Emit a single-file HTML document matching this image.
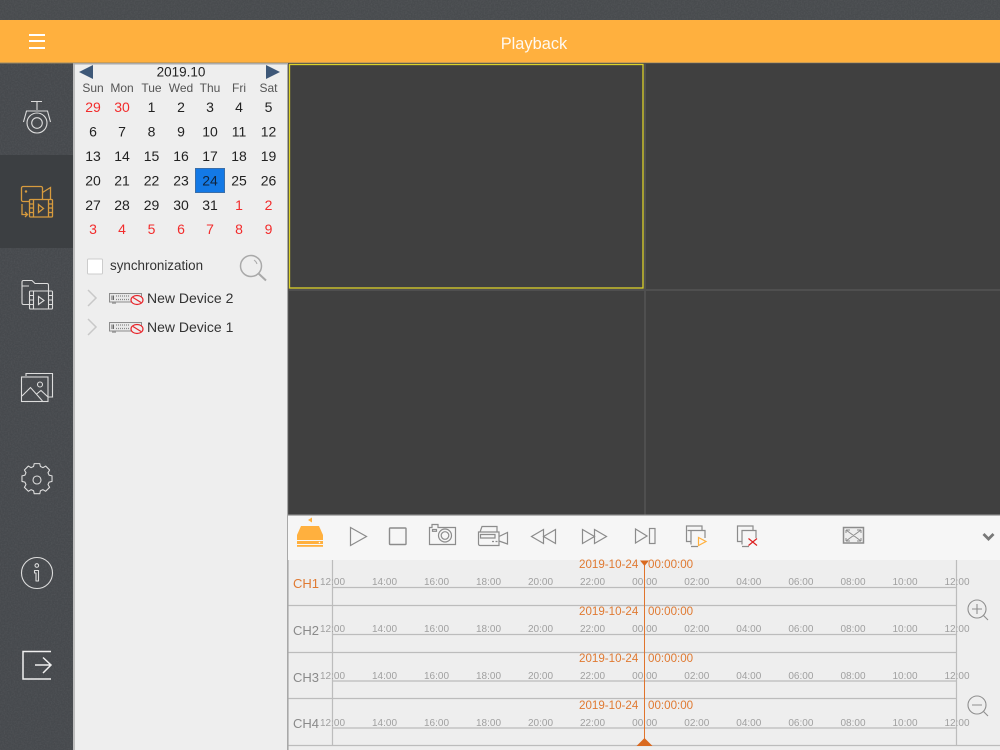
<!DOCTYPE html>
<html>
<head>
<meta charset="utf-8">
<title>Playback</title>
<style>
html,body{margin:0;padding:0;width:1000px;height:750px;overflow:hidden;background:#46494c}
svg{display:block;font-family:"Liberation Sans",sans-serif}
</style>
</head>
<body>
<svg width="1000" height="750" viewBox="0 0 1000 750" xmlns="http://www.w3.org/2000/svg">
<defs>
<filter id="n" x="0" y="0" width="100%" height="100%"><feTurbulence type="fractalNoise" baseFrequency="0.7" numOctaves="2" seed="4"/><feColorMatrix values="0 0 0 0 1 0 0 0 0 1 0 0 0 0 1 0.5 0 0 0 -0.17"/></filter>
</defs>
<!-- backgrounds -->
<rect width="1000" height="750" fill="#46494d"/>
<rect x="0" y="0" width="1000" height="20" fill="#484b4e"/>
<rect x="0" y="155" width="73" height="93" fill="#3c3f42"/>
<rect x="0" y="0" width="1000" height="20" filter="url(#n)" opacity=".2"/>
<rect x="0" y="63" width="73" height="92" filter="url(#n)" opacity=".2"/>
<rect x="0" y="248" width="73" height="502" filter="url(#n)" opacity=".2"/>
<rect x="0" y="20" width="1000" height="43" fill="#ffb03e"/>
<rect x="0" y="62.5" width="1000" height="1" fill="#9a8a68"/>
<rect x="29" y="34" width="16" height="2" fill="#fff"/>
<rect x="29" y="40" width="16" height="2" fill="#fff"/>
<rect x="29" y="47" width="16" height="2" fill="#fff"/>
<text x="534" y="49" font-size="16.4" fill="#fff" fill-opacity=".92" text-anchor="middle">Playback</text>

<!-- side icons -->
<g fill="none" stroke="#dcdcdc" stroke-width="1.1">
<path d="M31 101.5H42M37 102V110M23.500 122L26.500 111H47.500L50.500 122"/>
<circle cx="37" cy="123" r="10"/><circle cx="37" cy="123" r="5.300"/>
<path d="M29 304.500H23.500A1.500 1.500 0 0 1 22 303V282A1.500 1.500 0 0 1 23.500 280.500H32L35 283.500H47A1.500 1.500 0 0 1 48.500 285V291M22 286H29"/>
<rect x="29.500" y="291" width="23" height="18" rx="1"/><path d="M33.500 291V309M48.500 291V309M29.500 295.500H33.500M29.500 300H33.500M29.500 304.500H33.500M48.500 295.500H52.500M48.500 300H52.500M48.500 304.500H52.500M38.500 296.500L44 300.500L38.500 304.500Z"/>
<path d="M26 376V373.500H52.500V397H48.500"/><rect x="21.500" y="377" width="26.500" height="24.500"/><circle cx="40" cy="384.500" r="2.500"/><path d="M22 396L30.500 387.500L42.500 401M36 394.500L41 390.500L48 397"/>
<g transform="translate(37 480) scale(.84) translate(-37 -484)" stroke-width="1.300"><path d="M33.700 464.500h6.600l.8 3.500 3 1.300 3.200-1.900 4.700 4.700-1.900 3.200 1.300 3 3.500.8v6.600l-3.500.8-1.300 3 1.900 3.200-4.700 4.700-3.200-1.900-3 1.300-.8 3.500h-6.600l-.8-3.500-3-1.300-3.200 1.900-4.700-4.700 1.900-3.200-1.300-3-3.500-.8v-6.600l3.500-.8 1.300-3-1.900-3.200 4.700-4.700 3.200 1.900 3-1.300z" stroke-linejoin="round"/></g>
<circle cx="37" cy="480" r="4"/>
<circle cx="37" cy="573" r="15.500"/><circle cx="36.800" cy="565.500" r="1.800"/><path d="M34.500 570.500h4v10.500h-2.500v-8h-1.500z" stroke-linejoin="round"/>
</g>
<path d="M51 651.500H23V679H51M35 665H51M43 657.500L51 665L43 673" fill="none" stroke="#f0f0f0" stroke-width="1.500"/>
<g fill="none" stroke="#d79b3e" stroke-width="1.300">
<path d="M29 201.500H23A1.500 1.500 0 0 1 21.500 200V188A1.500 1.500 0 0 1 23 186.500H41A1.500 1.500 0 0 1 42.500 188V199"/><path d="M42.500 192.500L50.500 187.500V199"/><circle cx="26" cy="191.500" r=".6"/>
<rect x="29.500" y="199.500" width="23" height="17.500" rx="1"/><path d="M33.500 199.500V217M48.500 199.500V217M29.500 204H33.500M29.500 208H33.500M29.500 212.500H33.500M48.500 204H52.500M48.500 208H52.500M48.500 212.500H52.500M38.500 204.500L43.500 208.500L38.500 212.500Z"/>
<path d="M22 204V214.500H27.500M25 212L27.500 214.500L25 217"/>
</g>

<!-- left panel -->
<rect x="73" y="63" width="215" height="687" fill="#eeeeee"/>
<rect x="73" y="63" width="2" height="687" fill="#bdbdbd"/>
<rect x="287" y="63" width="1.500" height="687" fill="#a8a8a8"/>
<rect x="73" y="63" width="215" height="1.500" fill="#aaaaaa"/>
<path d="M93 65V79L79 72Z" fill="#3e5878"/><path d="M266 65V79L280 72Z" fill="#3e5878"/>
<text x="181" y="76.500" font-size="13.500" fill="#222" text-anchor="middle">2019.10</text>
<g font-size="12" fill="#555" text-anchor="middle">
<text x="93" y="92">Sun</text><text x="122" y="92">Mon</text><text x="151.500" y="92">Tue</text><text x="181" y="92">Wed</text><text x="210" y="92">Thu</text><text x="239" y="92">Fri</text><text x="268.500" y="92">Sat</text>
</g>
<rect x="195.500" y="168.500" width="29" height="24" fill="#1379e6" stroke="#3a6ea8"/>
<g font-size="14" fill="#222" text-anchor="middle">
<text x="93" y="112" fill="#f22c2c">29</text><text x="122" y="112" fill="#f22c2c">30</text><text x="151.500" y="112">1</text><text x="181" y="112">2</text><text x="210" y="112">3</text><text x="239" y="112">4</text><text x="268.500" y="112">5</text>
<text x="93" y="136.500">6</text><text x="122" y="136.500">7</text><text x="151.500" y="136.500">8</text><text x="181" y="136.500">9</text><text x="210" y="136.500">10</text><text x="239" y="136.500">11</text><text x="268.500" y="136.500">12</text>
<text x="93" y="161">13</text><text x="122" y="161">14</text><text x="151.500" y="161">15</text><text x="181" y="161">16</text><text x="210" y="161">17</text><text x="239" y="161">18</text><text x="268.500" y="161">19</text>
<text x="93" y="185.500">20</text><text x="122" y="185.500">21</text><text x="151.500" y="185.500">22</text><text x="181" y="185.500">23</text><text x="210" y="185.500" fill="#10233a">24</text><text x="239" y="185.500">25</text><text x="268.500" y="185.500">26</text>
<text x="93" y="210">27</text><text x="122" y="210">28</text><text x="151.500" y="210">29</text><text x="181" y="210">30</text><text x="210" y="210">31</text><text x="239" y="210" fill="#f22c2c">1</text><text x="268.500" y="210" fill="#f22c2c">2</text>
<text x="93" y="234" fill="#f22c2c">3</text><text x="122" y="234" fill="#f22c2c">4</text><text x="151.500" y="234" fill="#f22c2c">5</text><text x="181" y="234" fill="#f22c2c">6</text><text x="210" y="234" fill="#f22c2c">7</text><text x="239" y="234" fill="#f22c2c">8</text><text x="268.500" y="234" fill="#f22c2c">9</text>
</g>
<rect x="87.500" y="259" width="15" height="15" rx="1" fill="#fff" stroke="#cccccc"/>
<text x="110" y="270" font-size="13.400" fill="#333">synchronization</text>
<circle cx="251" cy="266" r="10.500" fill="none" stroke="#a9a9a9" stroke-width="1.500"/>
<path d="M258.500 273.500L266 280.500" stroke="#a9a9a9" stroke-width="2"/>
<path d="M254 260a6.500 6.500 0 0 1 3 4" fill="none" stroke="#a9a9a9"/>
<g>
<path d="M88 290L96 298L88 306" fill="none" stroke="#c8c8c8" stroke-width="1.500"/>
<rect x="109.500" y="293.500" width="32" height="8.500" fill="#e8e8e8" stroke="#8c8c8c"/>
<path d="M112 295.500V300M113.500 295.500V300" stroke="#666" stroke-width="1"/>
<path d="M116 296H130M116 299.500H130" stroke="#888" stroke-width="1.200" stroke-dasharray="1 1"/>
<path d="M112 303H116" stroke="#999" stroke-width="1.500"/>
<ellipse cx="137" cy="300" rx="6" ry="4.500" fill="#eee" stroke="#e8252b" stroke-width="1.200"/>
<path d="M133 297.500L141 302.500" stroke="#e8252b" stroke-width="1.200"/>
<text x="147" y="303" font-size="14" fill="#333">New Device 2</text>
</g>
<g transform="translate(0 29)">
<path d="M88 290L96 298L88 306" fill="none" stroke="#c8c8c8" stroke-width="1.500"/>
<rect x="109.500" y="293.500" width="32" height="8.500" fill="#e8e8e8" stroke="#8c8c8c"/>
<path d="M112 295.500V300M113.500 295.500V300" stroke="#666" stroke-width="1"/>
<path d="M116 296H130M116 299.500H130" stroke="#888" stroke-width="1.200" stroke-dasharray="1 1"/>
<path d="M112 303H116" stroke="#999" stroke-width="1.500"/>
<ellipse cx="137" cy="300" rx="6" ry="4.500" fill="#eee" stroke="#e8252b" stroke-width="1.200"/>
<path d="M133 297.500L141 302.500" stroke="#e8252b" stroke-width="1.200"/>
<text x="147" y="303" font-size="14" fill="#333">New Device 1</text>
</g>

<!-- video grid -->
<rect x="288" y="63" width="712" height="452" fill="#4f4f4f"/>
<rect x="289" y="64" width="355" height="225" fill="#404040"/>
<rect x="289.500" y="64.500" width="353.500" height="223.500" fill="none" stroke="#dcd22a" stroke-width="1.300"/>
<rect x="646" y="64" width="354" height="225" fill="#404040"/>
<rect x="289" y="291" width="355" height="224" fill="#404040"/>
<rect x="646" y="291" width="354" height="224" fill="#404040"/>

<!-- toolbar -->
<rect x="288" y="515" width="712" height="45" fill="#f6f6f6"/>
<rect x="288" y="514.500" width="712" height="1.200" fill="#9a9a9a"/>
<path d="M312 517.500V522.500L308 520Z" fill="#ffb03e"/>
<path d="M301 526H319L323 535V540H297V535Z" fill="#ffb03e"/>
<rect x="297" y="541" width="26" height="3" fill="#ffb03e"/>
<rect x="297" y="545" width="26" height="1.800" fill="#ffb03e"/>
<circle cx="319.500" cy="542.500" r=".8" fill="#fff"/>
<g fill="none" stroke="#8c8c8c" stroke-width="1.200">
<path d="M350.500 527.500V545.500L366.500 536.500Z"/>
<rect x="389.500" y="528" width="16.500" height="16.500" stroke-width="1.400" rx=".8"/>
<path d="M429.500 527.500H432V524.500H438V527.500H455.500V544.500H429.500Z"/><circle cx="445" cy="535.500" r="6.500"/><circle cx="445" cy="535.500" r="3.800"/><rect x="432.500" y="529.500" width="4" height="1.800"/>
<path d="M480 532L482 526.500H497V532M478.500 532H499V545.500H480A1.500 1.500 0 0 1 478.500 544ZM480.500 534.500H495V538H480.500ZM499 536.500L507.500 532.500V544L499 541M492 541.500H494M495.500 541.500H497.500"/>
<path d="M543.500 529.500L531.500 536.500L543.500 543.500ZM555.500 529.500L543.500 536.500L555.500 543.500Z"/>
<path d="M582.500 529.500L594.500 536.500L582.500 543.500ZM594.500 529.500L606.500 536.500L594.500 543.500Z"/>
<path d="M635.500 529L647 536L635.500 543Z"/><rect x="649.500" y="528.500" width="5.500" height="15"/>
<path d="M691 541.500H686.500V526H702V530M691 544.500V530.500H705V538M691 546.500H698M687.500 530.500H691"/>
<path d="M742 541.500H737.500V526H753V530M742 544.500V530.500H756V538M742 546.500H749"/>
</g>
<path d="M698.500 537.500V545.500L706 541.500Z" fill="none" stroke="#ffb03e" stroke-width="1.200"/>
<path d="M748.500 538.500L757 545.500M757 538.500L748.500 545.500" stroke="#dd2020" stroke-width="1.200"/>
<rect x="843.500" y="527.500" width="20" height="15.500" fill="#eee" stroke="#8c8c8c" stroke-width="1.500"/>
<path d="M846 530L861 541M861 530L846 541M846 530H850M846 530V533M861 530H857M861 530V533M846 541H850M846 541V538M861 541H857M861 541V538" fill="none" stroke="#8c8c8c" stroke-width="1"/>
<path d="M983.500 534L988.500 539L993.500 534" fill="none" stroke="#787878" stroke-width="2.800"/>

<!-- timeline -->
<rect x="288" y="560" width="712" height="190" fill="#eeeeee"/>
<g fill="none" stroke="#bcbcbc" stroke-width="1.200">
<path d="M288 605.500H956M288 652.500H956M288 698.500H956M288 745.500H1000"/>
<path d="M332 587.500H956M332 634.500H956M332 681H956M332 728H956"/>
<path d="M332.500 560V745M956.500 560V745"/>
<path d="M288 560V750" stroke="#a8a8a8"/>
</g>
<g font-size="13" fill="#8a8a8a">
<text x="293" y="588" fill="#e07a32">CH1</text><text x="293" y="635">CH2</text><text x="293" y="682">CH3</text><text x="293" y="728">CH4</text>
</g>
<g font-size="10" fill="#a0a0a0" text-anchor="middle">
<text x="332.500" y="585">12:00</text><text x="384.500" y="585">14:00</text><text x="436.500" y="585">16:00</text><text x="488.500" y="585">18:00</text><text x="540.500" y="585">20:00</text><text x="592.500" y="585">22:00</text><text x="644.700" y="585">00:00</text><text x="696.800" y="585">02:00</text><text x="748.800" y="585">04:00</text><text x="800.900" y="585">06:00</text><text x="853" y="585">08:00</text><text x="905" y="585">10:00</text><text x="957" y="585">12:00</text>
<text x="332.500" y="632">12:00</text><text x="384.500" y="632">14:00</text><text x="436.500" y="632">16:00</text><text x="488.500" y="632">18:00</text><text x="540.500" y="632">20:00</text><text x="592.500" y="632">22:00</text><text x="644.700" y="632">00:00</text><text x="696.800" y="632">02:00</text><text x="748.800" y="632">04:00</text><text x="800.900" y="632">06:00</text><text x="853" y="632">08:00</text><text x="905" y="632">10:00</text><text x="957" y="632">12:00</text>
<text x="332.500" y="679">12:00</text><text x="384.500" y="679">14:00</text><text x="436.500" y="679">16:00</text><text x="488.500" y="679">18:00</text><text x="540.500" y="679">20:00</text><text x="592.500" y="679">22:00</text><text x="644.700" y="679">00:00</text><text x="696.800" y="679">02:00</text><text x="748.800" y="679">04:00</text><text x="800.900" y="679">06:00</text><text x="853" y="679">08:00</text><text x="905" y="679">10:00</text><text x="957" y="679">12:00</text>
<text x="332.500" y="726">12:00</text><text x="384.500" y="726">14:00</text><text x="436.500" y="726">16:00</text><text x="488.500" y="726">18:00</text><text x="540.500" y="726">20:00</text><text x="592.500" y="726">22:00</text><text x="644.700" y="726">00:00</text><text x="696.800" y="726">02:00</text><text x="748.800" y="726">04:00</text><text x="800.900" y="726">06:00</text><text x="853" y="726">08:00</text><text x="905" y="726">10:00</text><text x="957" y="726">12:00</text>
</g>
<g font-size="11.600" fill="#e07a32">
<text x="579" y="568">2019-10-24</text><text x="648" y="568">00:00:00</text>
<text x="579" y="615">2019-10-24</text><text x="648" y="615">00:00:00</text>
<text x="579" y="662">2019-10-24</text><text x="648" y="662">00:00:00</text>
<text x="579" y="709">2019-10-24</text><text x="648" y="709">00:00:00</text>
</g>
<rect x="644" y="561" width="1" height="184" fill="#e0742c"/>
<path d="M640 560.500H649L644.500 566Z" fill="#d9691f"/>
<path d="M636.500 746L644.500 738L652.500 746Z" fill="#d9691f"/>
<g fill="none" stroke="#8f8f8f" stroke-width="1.100">
<circle cx="977" cy="609" r="9"/><path d="M972 609H982M977 604V614M983.500 615.500L988 620"/>
<circle cx="977" cy="705" r="9"/><path d="M972 705H982M983.500 711.500L988 716"/>
</g>
</svg>
</body>
</html>
